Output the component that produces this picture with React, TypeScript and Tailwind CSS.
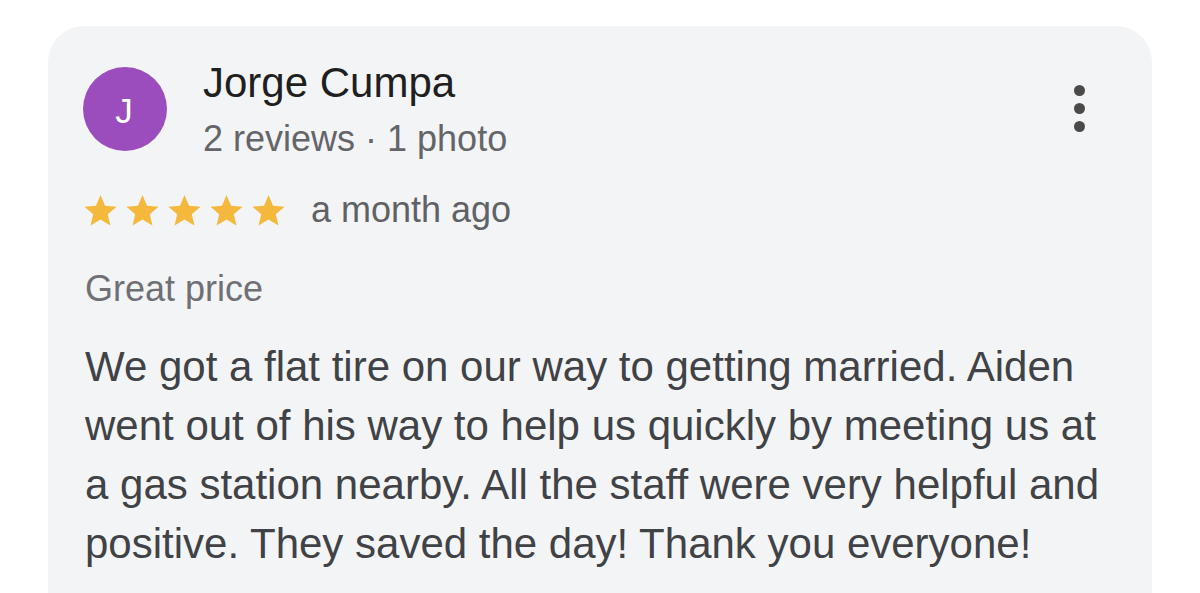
import React from "react";

const Star = () => (
  <svg width="33" height="31" viewBox="2 2 20 19.27" className="shrink-0">
    <path
      d="M12 17.27L18.18 21l-1.64-7.03L22 9.24l-7.19-.61L12 2 9.19 8.63 2 9.24l5.46 4.73L5.82 21z"
      fill="#f4b93c"
    />
  </svg>
);

export default function App() {
  return (
    <div
      className="w-[1200px] h-[593px] bg-white overflow-hidden pt-[26px] pl-[48px]"
      style={{ fontFamily: '"Liberation Sans", Arial, sans-serif' }}
    >
      <div className="w-[1104px] h-[600px] bg-[#f3f4f6] rounded-t-[36px] pt-[31px] pl-[35px] pr-[37px]">
        {/* header */}
        <div className="flex items-start">
          <div className="mt-[10px] w-[84px] h-[84px] rounded-full bg-[#9c4dbd] flex items-center justify-center shrink-0">
            <span className="text-white text-[35px] leading-none mt-[2px] -ml-[2px]">J</span>
          </div>
          <div className="ml-[36px] flex-1">
            <div className="text-[42px] leading-[52px] text-[#1f1f1f]">Jorge Cumpa</div>
            <div className="mt-[8px] text-[36px] leading-[44px] text-[#636569]">
              2 reviews · 1 photo
            </div>
          </div>
          <div className="mt-[28px] mr-[30px] flex flex-col items-center gap-[7px]">
            <div className="w-[11px] h-[11px] rounded-full bg-[#4a4a4a]" />
            <div className="w-[11px] h-[11px] rounded-full bg-[#4a4a4a]" />
            <div className="w-[11px] h-[11px] rounded-full bg-[#4a4a4a]" />
          </div>
        </div>

        {/* rating row */}
        <div className="mt-[27px] flex items-center pl-[1px]">
          <div className="flex items-center gap-[9px]">
            <Star />
            <Star />
            <Star />
            <Star />
            <Star />
          </div>
          <span className="ml-[26px] text-[36px] leading-[44px] text-[#5f6164]">a month ago</span>
        </div>

        {/* title */}
        <div className="mt-[35px] pl-[2px] text-[36px] leading-[44px] text-[#6e7075]">Great price</div>

        {/* body */}
        <div className="mt-[26px] pl-[2px] text-[42px] leading-[59px] text-[#404246] whitespace-nowrap">
          We got a flat tire on our way to getting married. Aiden
          <br />
          went out of his way to help us quickly by meeting us at
          <br />
          a gas station nearby. All the staff were very helpful and
          <br />
          positive. They saved the day! Thank you everyone!
        </div>
      </div>
    </div>
  );
}
